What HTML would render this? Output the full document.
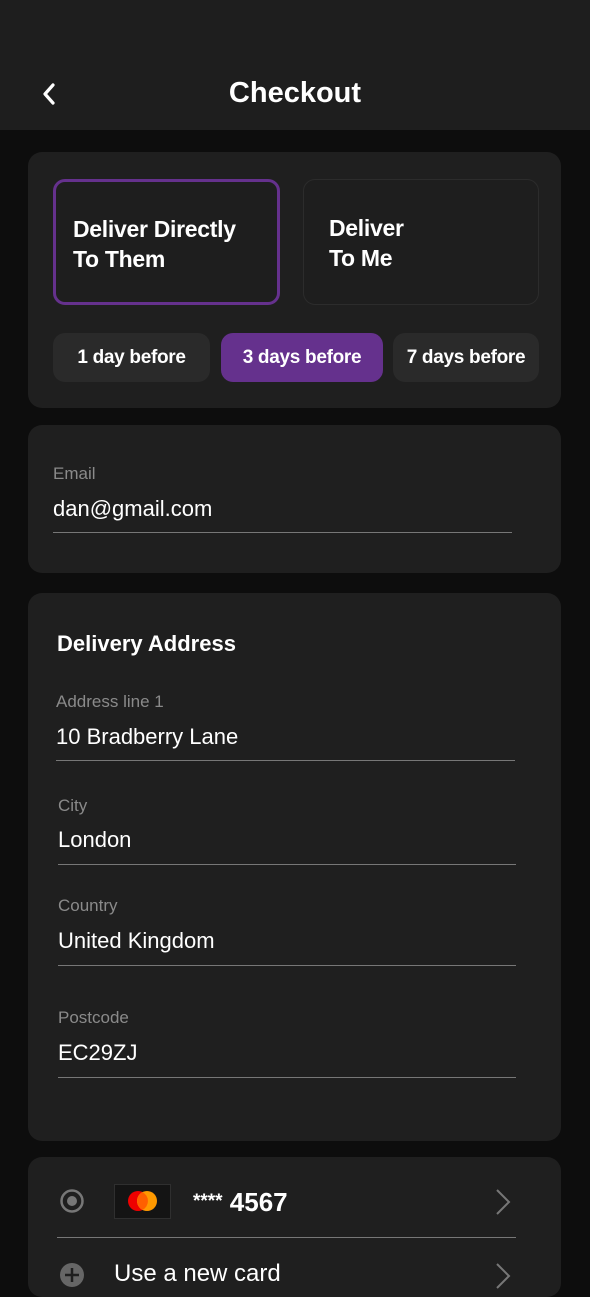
<!DOCTYPE html><html><head><style>
*{margin:0;padding:0;box-sizing:border-box}
body{width:590px;height:1278px;overflow:hidden;background:#0d0d0d;font-family:"Liberation Sans",sans-serif;color:#fff;position:relative}
.a{position:absolute}
.card{position:absolute;background:#1f1f1f;border-radius:14px;left:28px;width:533px}
.lab{position:absolute;color:#8a8a8a;font-size:17px}
.val{position:absolute;font-size:22px;color:#fff}
.line{position:absolute;height:1px;background:#777}
.pill{position:absolute;top:333px;height:49px;border-radius:12px;background:#2a2a2a;font-size:19px;font-weight:bold;line-height:49px;text-align:center;letter-spacing:-0.3px}
.opt{position:absolute;top:179px;height:126px;border-radius:12px;font-size:23px;font-weight:bold;line-height:30px;letter-spacing:-0.3px}
</style></head><body>
<div class="a" style="left:0;top:0;width:590px;height:130px;background:#1e1e1e"></div>
<svg class="a" style="left:40px;top:83px" width="18" height="22" viewBox="0 0 18 22"><path d="M13 2 L5 11 L13 20" stroke="#fff" stroke-width="3.2" fill="none" stroke-linecap="round" stroke-linejoin="round"/></svg>
<div class="a" style="left:0;width:590px;top:77px;text-align:center;font-size:29px;font-weight:bold;letter-spacing:0px">Checkout</div>

<div class="card" style="top:152px;height:256px"></div>
<div class="opt" style="left:53px;width:227px;border:3px solid #65318d;background:#1e1e1e;padding:32px 0 0 17px">Deliver Directly<br>To Them</div>
<div class="opt" style="left:303px;width:236px;border:1.5px solid #2c2c2c;background:#1e1e1e;padding:33px 0 0 25px">Deliver<br>To Me</div>
<div class="pill" style="left:53px;width:157px">1 day before</div>
<div class="pill" style="left:221px;width:162px;background:#65318d">3 days before</div>
<div class="pill" style="left:393px;width:146px">7 days before</div>

<div class="card" style="top:425px;height:148px"></div>
<div class="lab" style="left:53px;top:464px">Email</div>
<div class="val" style="left:53px;top:496px">dan@gmail.com</div>
<div class="line" style="left:53px;top:532px;width:459px"></div>

<div class="card" style="top:593px;height:548px"></div>
<div class="a" style="left:57px;top:631px;font-size:22px;font-weight:bold">Delivery Address</div>
<div class="lab" style="left:56px;top:692px">Address line 1</div>
<div class="val" style="left:56px;top:724px">10 Bradberry Lane</div>
<div class="line" style="left:56px;top:760px;width:459px"></div>
<div class="lab" style="left:58px;top:796px">City</div>
<div class="val" style="left:58px;top:827px">London</div>
<div class="line" style="left:58px;top:864px;width:458px"></div>
<div class="lab" style="left:58px;top:896px">Country</div>
<div class="val" style="left:58px;top:928px">United Kingdom</div>
<div class="line" style="left:58px;top:965px;width:458px"></div>
<div class="lab" style="left:58px;top:1008px">Postcode</div>
<div class="val" style="left:58px;top:1040px">EC29ZJ</div>
<div class="line" style="left:58px;top:1077px;width:458px"></div>

<div class="card" style="top:1157px;height:140px"></div>
<svg class="a" style="left:59px;top:1188px" width="26" height="26"><circle cx="13" cy="13" r="10.5" stroke="#777" stroke-width="2.5" fill="none"/><circle cx="13" cy="13" r="5" fill="#777"/></svg>
<div class="a" style="left:114px;top:1184px;width:57px;height:35px;background:#141414;border:1px solid #2f2f2f"></div>
<svg class="a" style="left:124px;top:1189px" width="36" height="24"><circle cx="14" cy="12" r="10" fill="#e00"/><circle cx="23" cy="12" r="10" fill="#f90"/><path d="M18.5 3.1 A10 10 0 0 1 18.5 20.9 A10 10 0 0 1 18.5 3.1Z" fill="#ff5f00"/></svg>
<div class="a" style="left:193px;top:1187px;font-size:26px;font-weight:bold"><span style="font-size:19px;vertical-align:4px">****</span> 4567</div>
<svg class="a" style="left:494px;top:1188px" width="20" height="28"><path d="M3 2 L15 14 L3 26" stroke="#777" stroke-width="2" fill="none"/></svg>
<div class="line" style="left:57px;top:1237px;width:459px;background:#777"></div>
<svg class="a" style="left:59px;top:1262px" width="26" height="26"><circle cx="13" cy="13" r="12" fill="#666"/><path d="M13 6V20M6 13H20" stroke="#1f1f1f" stroke-width="2.5"/></svg>
<div class="a" style="left:114px;top:1260px;font-size:24px">Use a new card</div>
<svg class="a" style="left:494px;top:1262px" width="20" height="28"><path d="M3 2 L15 14 L3 26" stroke="#777" stroke-width="2" fill="none"/></svg>
</body></html>
